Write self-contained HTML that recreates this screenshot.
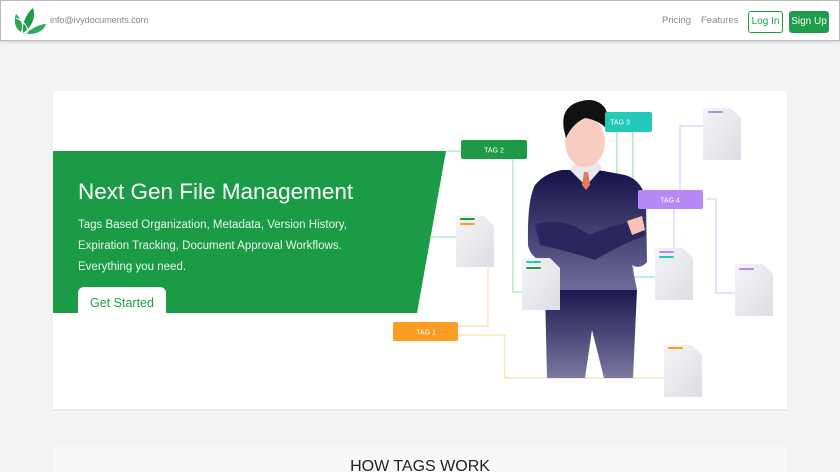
<!DOCTYPE html>
<html><head><style>
*{margin:0;padding:0;box-sizing:border-box}
html,body{width:840px;height:472px;overflow:hidden}
body{background:#f3f3f3;font-family:"Liberation Sans",sans-serif;position:relative}
.hdr{position:absolute;left:0;top:0;width:840px;height:41px;background:#fff;border:1px solid #bbb;box-shadow:0 1px 3px rgba(0,0,0,.15)}
.mail{position:absolute;left:49px;top:14px;font-size:9.2px;color:#888;letter-spacing:-.1px}
.nav{position:absolute;top:14px;font-size:9.5px;color:#888;white-space:nowrap}
.btn{position:absolute;top:10px;height:22px;font-size:10px;line-height:20px;text-align:center;border-radius:3px;white-space:nowrap}
.card{position:absolute;left:53px;top:91px;width:734px;height:318px;background:#fff;box-shadow:0 1px 2px rgba(0,0,0,.08)}
.card2{position:absolute;left:53px;top:447px;width:734px;height:40px;background:#f8f8f8}
h1{position:absolute;left:78px;top:179px;font-size:22.5px;font-weight:normal;color:#fff;white-space:nowrap}
.sub{position:absolute;left:78px;top:215px;font-size:11.5px;line-height:21px;color:#e8f6ec;white-space:nowrap}
.gs{position:absolute;left:78px;top:287px;width:88px;height:26px;background:#fff;border-radius:6px 6px 0 0;color:#1e9e4a;font-size:12.5px;text-align:center;line-height:32px}
.how{position:absolute;left:0;width:840px;top:458px;text-align:center;font-size:16px;color:#222}
</style></head><body>
<div class="hdr">
<svg style="position:absolute;left:11px;top:5px" width="36" height="30" viewBox="0 0 36 30">
<path d="M9 26 C2 22 2 14 4 8 C8 12 12 18 9 26Z" fill="#2ea356"/>
<path d="M11 27 C10 17 14 8 21 2 C24 10 21 20 11 27Z" fill="#1e9e4a"/>
<path d="M13 28 C20 22 28 18 34 18 C32 25 24 29 13 28Z" fill="#34ac5e"/>
<path d="M4 12 C14 16 18 24 14 29" stroke="#fff" stroke-width="1" fill="none"/>
</svg>
<div class="mail">info@ivydocuments.com</div>
<div class="nav" style="left:661px">Pricing</div>
<div class="nav" style="left:700px">Features</div>
<div class="btn" style="left:747px;width:35px;border:1px solid #1e9e4a;color:#1e9e4a">Log In</div>
<div class="btn" style="left:788px;width:40px;background:#1e9e4a;color:#fff;border:1px solid #1e9e4a">Sign Up</div>
</div>
<div class="card"></div>
<svg style="position:absolute;left:0;top:0" width="840" height="472">
<defs>
<linearGradient id="sw" x1="0" y1="0" x2="0" y2="1"><stop offset="0" stop-color="#15124a"/><stop offset="1" stop-color="#6f6d98"/></linearGradient>
<linearGradient id="pt" x1="0" y1="0" x2="0" y2="1"><stop offset="0" stop-color="#1b1850"/><stop offset="1" stop-color="#7a789f"/></linearGradient>
<linearGradient id="dc" x1="0" y1="0" x2="1" y2="1"><stop offset="0" stop-color="#f4f4f7"/><stop offset="1" stop-color="#dcdce4"/></linearGradient>
</defs>
<polygon points="53,151 446,151 417,313 53,313" fill="#1b9b45"/>
<g fill="none" stroke-width="1">
<path d="M446 151 H461" stroke="#9fdbb2"/>
<path d="M513 159 V292 H522" stroke="#9fdbb2"/>
<path d="M430 237 H456" stroke="#9fdbb2"/>
<path d="M488 268 V326 H458" stroke="#fad39e"/>
<path d="M458 335 H505 V378 H664" stroke="#fad39e"/>
<path d="M617 132 V279 H560" stroke="#7fd9cf"/>
<path d="M633 132 V277 H655" stroke="#7fd9cf"/>
<path d="M680 190 V126 H703" stroke="#d6c0fb"/>
<path d="M674 209 V250" stroke="#d6c0fb"/>
<path d="M706 199 H716 V293 H735" stroke="#d6c0fb"/>
</g>
<path d="M545 290 H637 L633 378 H604 L592 330 L585 378 H547Z" fill="url(#pt)"/>
<path d="M562 170 L598 170 L625 175 Q642 180 646 200 L647 262 Q640 270 632 265 L637 290 H545 L548 265 Q530 258 528 245 Q527 200 535 185 Q545 173 562 170Z" fill="url(#sw)"/>
<path d="M535 225 Q560 215 590 235 Q610 225 640 220 L646 235 Q620 245 595 260 Q565 250 540 245Z" fill="#2a2660"/>
<path d="M627 221 L642 216 L645 230 L632 235Z" fill="#f4c3b2"/>
<path d="M570 170 L586 186 L602 168 L596 160 L575 160Z" fill="#e8e8ee"/>
<path d="M584 172 L588 172 L590 185 L586 190 L582 185Z" fill="#e8785e"/>
<ellipse cx="585" cy="142" rx="20" ry="25" fill="#f7cdbf"/>
<path d="M564 130 Q560 108 578 102 Q596 96 605 108 Q610 118 606 128 Q598 120 585 118 Q572 124 566 138Z" fill="#111"/>
<g fill="url(#dc)">
<path d="M456 216 H484 L494 226 V267 H456Z"/>
<path d="M522 258 H550 L560 268 V310 H522Z"/>
<path d="M655 248 H683 L693 258 V300 H655Z"/>
<path d="M703 108 H731 L741 118 V160 H703Z"/>
<path d="M735 264 H763 L773 274 V316 H735Z"/>
<path d="M664 345 H692 L702 355 V397 H664Z"/>
</g>
<g stroke-width="2" stroke-linecap="round">
<path d="M461 219 H474" stroke="#1b9b45"/><path d="M461 224 H474" stroke="#f99d25"/>
<path d="M527 262 H540" stroke="#22c9b9"/><path d="M527 268 H540" stroke="#1b9b45"/>
<path d="M660 252 H673" stroke="#b689f7"/><path d="M660 257 H673" stroke="#22c9b9"/>
<path d="M709 112 H722" stroke="#b689f7"/>
<path d="M740 269 H753" stroke="#b689f7"/>
<path d="M669 348 H682" stroke="#f99d25"/>
</g>
<g font-family="Liberation Sans,sans-serif" font-size="7" fill="#fff" text-anchor="middle">
<rect x="461" y="140" width="66" height="19" rx="2" fill="#1c9a45"/><text x="494" y="152.5">TAG 2</text>
<rect x="605" y="112" width="47" height="20" rx="2" fill="#22c9b9"/><text x="620" y="124.5">TAG 3</text>
<rect x="638" y="190" width="65" height="19" rx="2" fill="#b689f7"/><text x="670" y="202.5">TAG 4</text>
<rect x="393" y="322" width="65" height="19" rx="2" fill="#f99d25"/><text x="426" y="334.5">TAG 1</text>
</g>
</svg>
<h1>Next Gen File Management</h1>
<div class="sub">Tags Based Organization, Metadata, Version History,<br>Expiration Tracking, Document Approval Workflows.<br>Everything you need.</div>
<div class="gs">Get Started</div>
<div class="card2"></div>
<div class="how">HOW TAGS WORK</div>
</body></html>
